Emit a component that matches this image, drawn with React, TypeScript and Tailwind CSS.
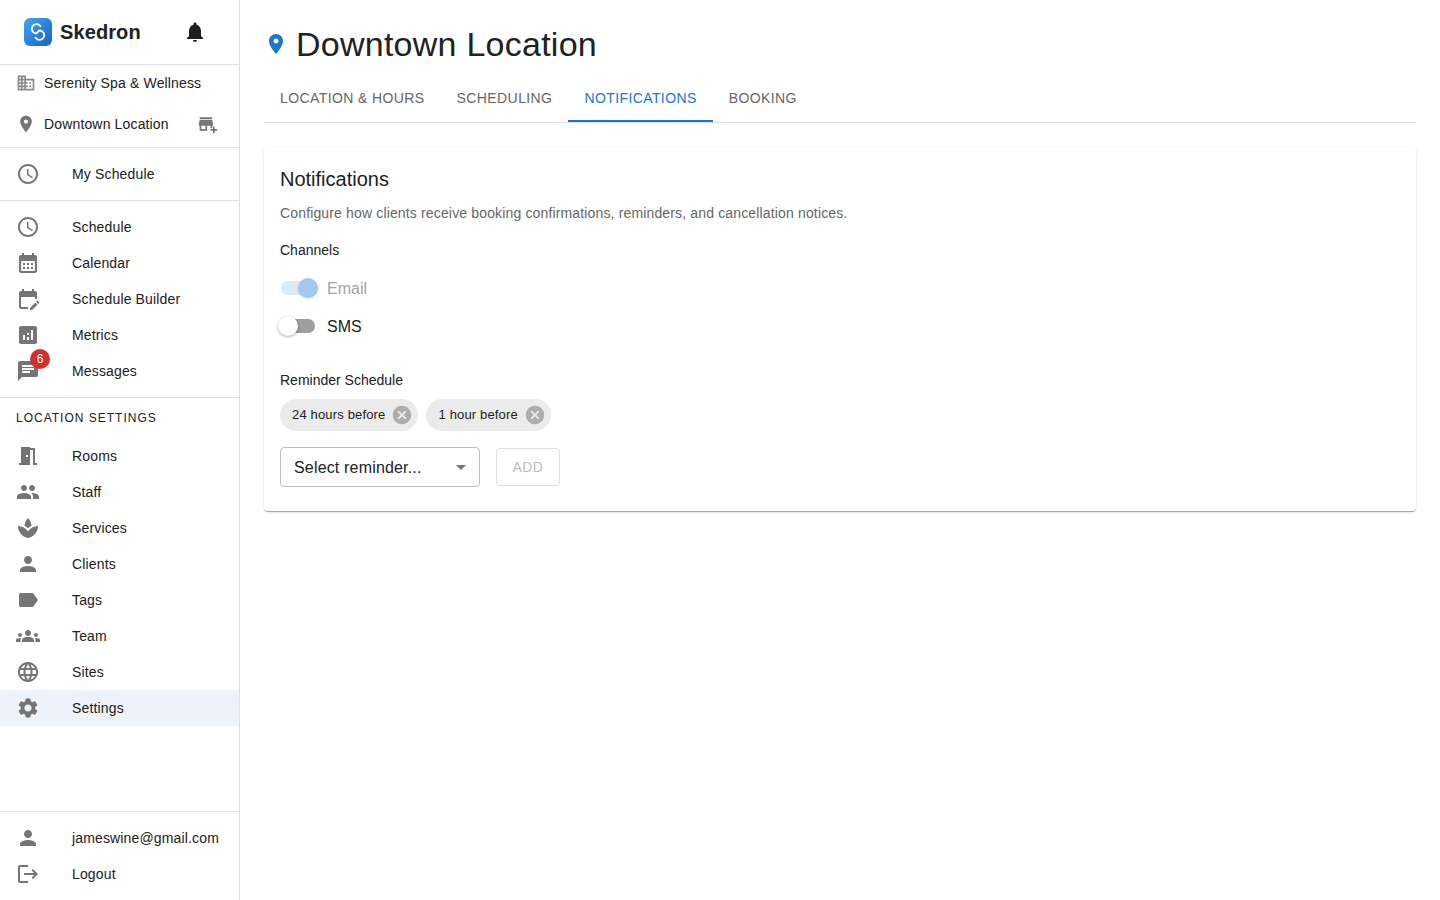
import React from 'react';

const ICONS: Record<string, string> = {
  bell: 'M12 22c1.1 0 2-.9 2-2h-4c0 1.1.89 2 2 2zm6-6v-5c0-3.07-1.64-5.64-4.5-6.32V4c0-.83-.67-1.5-1.5-1.5s-1.5.67-1.5 1.5v.68C7.63 5.36 6 7.92 6 11v5l-2 2v1h16v-1l-2-2z',
  business: 'M12 7V3H2v18h20V7H12zM6 19H4v-2h2v2zm0-4H4v-2h2v2zm0-4H4V9h2v2zm0-4H4V5h2v2zm4 12H8v-2h2v2zm0-4H8v-2h2v2zm0-4H8V9h2v2zm0-4H8V5h2v2zm10 12h-8v-2h2v-2h-2v-2h2v-2h-2V9h8v10zm-2-8h-2v2h2v-2zm0 4h-2v2h2v-2z',
  pin: 'M12 2C8.13 2 5 5.13 5 9c0 5.25 7 13 7 13s7-7.75 7-13c0-3.87-3.13-7-7-7zm0 9.5c-1.38 0-2.5-1.12-2.5-2.5s1.12-2.5 2.5-2.5 2.5 1.12 2.5 2.5-1.12 2.5-2.5 2.5z',
  addBusiness: 'M15 17h2v-3h1v-2l-1-5H2l-1 5v2h1v6h9v-6h4v3zm-6 1H4v-4h5v4zM2 4h15v2H2zM20 18v-3h-2v3h-3v2h3v3h2v-3h3v-2z',
  clock: 'M11.99 2C6.47 2 2 6.48 2 12s4.47 10 9.99 10C17.52 22 22 17.52 22 12S17.52 2 11.99 2zM12 20c-4.42 0-8-3.58-8-8s3.58-8 8-8 8 3.58 8 8-3.58 8-8 8zM12.5 7H11v6l5.25 3.15.75-1.23-4.5-2.67z',
  calendar: 'M19 4h-1V2h-2v2H8V2H6v2H5c-1.11 0-1.99.9-1.99 2L3 20c0 1.1.89 2 2 2h14c1.1 0 2-.9 2-2V6c0-1.1-.9-2-2-2zm0 16H5V10h14v10zM9 14H7v-2h2v2zm4 0h-2v-2h2v2zm4 0h-2v-2h2v2zm-8 4H7v-2h2v2zm4 0h-2v-2h2v2zm4 0h-2v-2h2v2z',
  editCalendar: 'M5 10h14v2h2V6c0-1.1-.9-2-2-2h-1V2h-2v2H8V2H6v2H5c-1.11 0-1.99.9-1.99 2L3 20c0 1.1.89 2 2 2h7v-2H5V10zm17.84 6.28-.71.71-2.12-2.12.71-.71c.39-.39 1.02-.39 1.41 0l.71.71c.39.39.39 1.02 0 1.41zm-3.54-.7 2.12 2.12-5.3 5.3H14v-2.12l5.3-5.3z',
  analytics: 'M19 3H5c-1.1 0-2 .9-2 2v14c0 1.1.9 2 2 2h14c1.1 0 2-.9 2-2V5c0-1.1-.9-2-2-2zM9 17H7v-5h2v5zm4 0h-2v-3h2v3zm0-5h-2v-2h2v2zm4 5h-2V7h2v10z',
  chat: 'M20 2H4c-1.1 0-1.99.9-1.99 2L2 22l4-4h14c1.1 0 2-.9 2-2V4c0-1.1-.9-2-2-2zM6 9h12v2H6V9zm8 5H6v-2h8v2zm4-6H6V6h12v2z',
  room: 'M14 6v15H3v-2h2V3h9v1h5v15h2v2h-4V6h-3zm-4 5v2h2v-2h-2z',
  people: 'M16 11c1.66 0 2.99-1.34 2.99-3S17.66 5 16 5c-1.66 0-3 1.34-3 3s1.34 3 3 3zm-8 0c1.66 0 2.99-1.34 2.99-3S9.66 5 8 5C6.34 5 5 6.34 5 8s1.34 3 3 3zm0 2c-2.33 0-7 1.17-7 3.5V19h14v-2.5c0-2.33-4.67-3.5-7-3.5zm8 0c-.29 0-.62.02-.97.05 1.16.84 1.97 1.97 1.97 3.45V19h6v-2.5c0-2.33-4.67-3.5-7-3.5z',
  spa: 'M15.49 9.63c-.18-2.79-1.31-5.51-3.43-7.63-2.14 2.14-3.32 4.86-3.55 7.63 1.28.68 2.46 1.56 3.49 2.63 1.03-1.06 2.21-1.94 3.49-2.63zM12 15.45C9.85 12.17 6.18 10 2 10c0 5.32 3.36 9.82 8.03 11.49.63.23 1.29.4 1.97.51.68-.12 1.33-.29 1.97-.51C18.64 19.82 22 15.32 22 10c-4.18 0-7.85 2.17-10 5.45z',
  person: 'M12 12c2.21 0 4-1.79 4-4s-1.79-4-4-4-4 1.79-4 4 1.79 4 4 4zm0 2c-2.67 0-8 1.34-8 4v2h16v-2c0-2.66-5.33-4-8-4z',
  label: 'M17.63 5.84C17.27 5.33 16.67 5 16 5L5 5.01C3.9 5.01 3 5.9 3 7v10c0 1.1.9 1.99 2 1.99L16 19c.67 0 1.27-.33 1.63-.84L22 12l-4.37-6.16z',
  groups: 'M12 12.75c1.63 0 3.07.39 4.24.9 1.08.48 1.76 1.56 1.76 2.73V18H6v-1.61c0-1.18.68-2.26 1.76-2.73 1.17-.52 2.61-.91 4.24-.91zM4 13c1.1 0 2-.9 2-2s-.9-2-2-2-2 .9-2 2 .9 2 2 2zm1.13 1.1c-.37-.06-.74-.1-1.13-.1-.99 0-1.93.21-2.78.58C.48 14.9 0 15.62 0 16.43V18h4.5v-1.61c0-.83.23-1.61.63-2.29zM20 13c1.1 0 2-.9 2-2s-.9-2-2-2-2 .9-2 2 .9 2 2 2zm4 3.43c0-.81-.48-1.53-1.22-1.85-.85-.37-1.79-.58-2.78-.58-.39 0-.76.04-1.13.1.4.68.63 1.46.63 2.29V18H24v-1.57zM12 6c1.66 0 3 1.34 3 3s-1.34 3-3 3-3-1.34-3-3 1.34-3 3-3z',
  globe: 'M11.99 2C6.47 2 2 6.48 2 12s4.47 10 9.99 10C17.52 22 22 17.52 22 12S17.52 2 11.99 2zm6.93 6h-2.95c-.32-1.25-.78-2.45-1.38-3.56 1.84.63 3.37 1.91 4.33 3.56zM12 4.04c.83 1.2 1.48 2.53 1.91 3.96h-3.82c.43-1.43 1.08-2.76 1.91-3.96zM4.26 14C4.1 13.36 4 12.69 4 12s.1-1.36.26-2h3.38c-.08.66-.14 1.32-.14 2 0 .68.06 1.34.14 2H4.26zm.82 2h2.95c.32 1.25.78 2.45 1.38 3.56-1.84-.63-3.37-1.9-4.33-3.56zm2.95-8H5.08c.96-1.66 2.49-2.93 4.33-3.56C8.81 5.55 8.35 6.75 8.03 8zM12 19.96c-.83-1.2-1.48-2.53-1.91-3.96h3.82c-.43 1.43-1.08 2.76-1.91 3.96zM14.34 14H9.66c-.09-.66-.16-1.32-.16-2 0-.68.07-1.35.16-2h4.68c.09.65.16 1.32.16 2 0 .68-.07 1.34-.16 2zm.25 5.56c.6-1.11 1.06-2.31 1.38-3.56h2.95c-.96 1.65-2.49 2.93-4.33 3.56zM16.36 14c.08-.66.14-1.32.14-2 0-.68-.06-1.34-.14-2h3.38c.16.64.26 1.31.26 2s-.1 1.36-.26 2h-3.38z',
  settings: 'M19.14 12.94c.04-.3.06-.61.06-.94 0-.32-.02-.64-.07-.94l2.03-1.58c.18-.14.23-.41.12-.61l-1.92-3.32c-.12-.22-.37-.29-.59-.22l-2.39.96c-.5-.38-1.03-.7-1.62-.94l-.36-2.54c-.04-.24-.24-.41-.48-.41h-3.84c-.24 0-.43.17-.47.41l-.36 2.54c-.59.24-1.13.57-1.62.94l-2.39-.96c-.22-.08-.47 0-.59.22L2.74 8.87c-.12.21-.08.47.12.61l2.03 1.58c-.05.3-.09.63-.09.94s.02.64.07.94l-2.03 1.58c-.18.14-.23.41-.12.61l1.92 3.32c.12.22.37.29.59.22l2.39-.96c.5.38 1.03.7 1.62.94l.36 2.54c.05.24.24.41.48.41h3.84c.24 0 .44-.17.47-.41l.36-2.54c.59-.24 1.13-.56 1.62-.94l2.39.96c.22.08.47 0 .59-.22l1.92-3.32c.12-.22.07-.47-.12-.61l-2.01-1.58zM12 15.6c-1.98 0-3.6-1.62-3.6-3.6s1.62-3.6 3.6-3.6 3.6 1.62 3.6 3.6-1.62 3.6-3.6 3.6z',
  logout: 'm17 7-1.41 1.41L18.17 11H8v2h10.17l-2.58 2.58L17 17l5-5zM4 5h8V3H4c-1.1 0-2 .9-2 2v14c0 1.1.9 2 2 2h8v-2H4V5z',
  cancel: 'M12 2C6.47 2 2 6.47 2 12s4.47 10 10 10 10-4.47 10-10S17.53 2 12 2zm5 13.59L15.59 17 12 13.41 8.41 17 7 15.59 10.59 12 7 8.41 8.41 7 12 10.59 15.59 7 17 8.41 13.41 12 17 15.59z',
  arrowDown: 'M7 10l5 5 5-5z',
};

const Icon: React.FC<{ name: string; className: string }> = ({ name, className }) => (
  <svg viewBox="0 0 24 24" fill="currentColor" className={className}>
    <path d={ICONS[name]} />
  </svg>
);

const NavItem: React.FC<{ icon: string; label: string; active?: boolean; badge?: string }> = ({ icon, label, active, badge }) => (
  <div className={`flex items-center h-9 pl-4 ${active ? 'bg-[#edf3fb]' : ''}`}>
    <div className="relative w-14 shrink-0">
      <Icon name={icon} className="w-6 h-6 text-[#757575]" />
      {badge && (
        <span className="absolute -top-[10px] left-[14px] w-5 h-5 rounded-full bg-[#d32f2f] text-white text-[12px] flex items-center justify-center">
          {badge}
        </span>
      )}
    </div>
    <span className="text-[14px] tracking-[0.15px] text-[#212121]">{label}</span>
  </div>
);

const Divider = () => <div className="h-px bg-[#e0e0e0]" />;

const tabs = ['LOCATION & HOURS', 'SCHEDULING', 'NOTIFICATIONS', 'BOOKING'];
const mainNav = [
  { icon: 'clock', label: 'Schedule' },
  { icon: 'calendar', label: 'Calendar' },
  { icon: 'editCalendar', label: 'Schedule Builder' },
  { icon: 'analytics', label: 'Metrics' },
  { icon: 'chat', label: 'Messages', badge: '6' },
];
const settingsNav = [
  { icon: 'room', label: 'Rooms' },
  { icon: 'people', label: 'Staff' },
  { icon: 'spa', label: 'Services' },
  { icon: 'person', label: 'Clients' },
  { icon: 'label', label: 'Tags' },
  { icon: 'groups', label: 'Team' },
  { icon: 'globe', label: 'Sites' },
  { icon: 'settings', label: 'Settings', active: true },
];

const Chip: React.FC<{ label: string }> = ({ label }) => (
  <div className="h-8 rounded-full bg-[#ebebeb] flex items-center pl-3 pr-[5px] gap-[6px]">
    <span className="text-[13px] text-[#212121] tracking-[0.16px]">{label}</span>
    <Icon name="cancel" className="w-[22px] h-[22px] text-[#adadad]" />
  </div>
);

export default function App() {
  return (
    <div className="flex h-screen bg-white font-['Liberation_Sans',Arial,sans-serif] text-[#212121] overflow-hidden">
      <aside className="w-[240px] shrink-0 border-r border-[#e0e0e0] flex flex-col">
        <div className="h-16 flex items-center pl-6 pr-8">
          <svg viewBox="0 0 28 28" className="w-7 h-7 shrink-0">
            <defs>
              <linearGradient id="logo" x1="0" y1="0" x2="1" y2="1">
                <stop offset="0" stopColor="#42a5f5" />
                <stop offset="1" stopColor="#1565c0" />
              </linearGradient>
            </defs>
            <rect width="28" height="28" rx="6" fill="url(#logo)" />
            <path d="M16.4 8.2A4.7 4.7 0 1 0 12 15.5C13.6 15.4 14 12.6 15.5 12.5A4.7 4.7 0 1 1 11.6 19.8" fill="none" stroke="#ffffff" strokeWidth="1.9" strokeLinecap="round" />
          </svg>
          <span className="ml-2 text-[20px] font-bold tracking-[0.1px] text-[#212121]">Skedron</span>
          <Icon name="bell" className="w-6 h-6 ml-auto text-[#1f1f1f]" />
        </div>
        <Divider />
        <div className="h-[82px] flex flex-col">
          <div className="flex items-center h-[36px] pl-4">
            <Icon name="business" className="w-5 h-5 text-[#8a8a8a] mr-2" />
            <span className="text-[14px] tracking-[0.15px]">Serenity Spa &amp; Wellness</span>
          </div>
          <div className="flex items-center h-[36px] mt-[5px] pl-4 pr-[21px]">
            <Icon name="pin" className="w-5 h-5 text-[#757575] mr-2" />
            <span className="text-[14px] tracking-[0.15px]">Downtown Location</span>
            <Icon name="addBusiness" className="w-5 h-5 ml-auto text-[#757575]" />
          </div>
        </div>
        <Divider />
        <div className="py-2">
          <NavItem icon="clock" label="My Schedule" />
        </div>
        <Divider />
        <div className="pt-2 pb-2">
          {mainNav.map((item) => (
            <NavItem key={item.label} {...item} />
          ))}
        </div>
        <Divider />
        <div className="h-[40px] flex items-center pl-4 text-[12px] tracking-[1px] text-[#212121]">LOCATION SETTINGS</div>
        {settingsNav.map((item) => (
          <NavItem key={item.label} {...item} />
        ))}
        <div className="flex-1" />
        <Divider />
        <div className="pt-2 pb-2">
          <NavItem icon="person" label="jameswine@gmail.com" />
          <NavItem icon="logout" label="Logout" />
        </div>
      </aside>

      <main className="flex-1 min-w-0 p-6">
        <div className="flex items-center h-10 gap-2">
          <Icon name="pin" className="w-6 h-6 text-[#1976d2]" />
          <h1 className="text-[34px] leading-10 font-normal tracking-[0.25px] text-[#212121]">Downtown Location</h1>
        </div>
        <div className="mt-[10px] h-[49px] border-b border-[#e0e0e0] flex">
          {tabs.map((tab) => (
            <div
              key={tab}
              className={`relative h-12 px-4 flex items-center text-[14px] tracking-[0.4px] ${
                tab === 'NOTIFICATIONS' ? 'text-[#1976d2]' : 'text-[#666666]'
              }`}
            >
              {tab}
              {tab === 'NOTIFICATIONS' && <span className="absolute left-0 right-0 bottom-0 h-[2px] bg-[#1976d2]" />}
            </div>
          ))}
        </div>

        <section className="mt-6 h-[364px] rounded bg-white p-4 shadow-[0_2px_1px_-1px_rgba(0,0,0,0.2),0_1px_1px_0_rgba(0,0,0,0.14),0_1px_3px_0_rgba(0,0,0,0.12)]">
          <h2 className="text-[20px] leading-8 font-normal">Notifications</h2>
          <p className="mt-2 text-[14px] leading-5 tracking-[0.15px] text-[#666666]">
            Configure how clients receive booking confirmations, reminders, and cancellation notices.
          </p>
          <p className="mt-[17px] text-[14px] leading-5">Channels</p>

          <div className="mt-[10px] flex items-center h-[38px]">
            <div className="relative w-[34px] h-[14px] ml-[1px] mb-[2px] rounded-full bg-[#dbe9f8]">
              <span className="absolute -top-[3px] left-[17px] w-5 h-5 rounded-full bg-[#a3c8ee] shadow-sm" />
            </div>
            <span className="ml-3 text-[16px] text-[#a3a3a3]">Email</span>
          </div>
          <div className="flex items-center h-[38px]">
            <div className="relative w-[34px] h-[14px] ml-[1px] mb-[2px] rounded-full bg-[#9e9e9e]">
              <span className="absolute -top-[3px] -left-[3px] w-5 h-5 rounded-full bg-white shadow-[0_1px_3px_rgba(0,0,0,0.35)]" />
            </div>
            <span className="ml-3 text-[16px]">SMS</span>
          </div>

          <p className="mt-[24px] text-[14px] leading-5">Reminder Schedule</p>
          <div className="mt-[9px] flex gap-2">
            <Chip label="24 hours before" />
            <Chip label="1 hour before" />
          </div>
          <div className="mt-4 flex items-center gap-4">
            <div className="w-[200px] h-10 rounded border border-[#bdbdbd] flex items-center pl-[13px] pr-[6px] text-[16px] tracking-[0.17px]">
              <span className="pt-[2px]">Select reminder...</span>
              <Icon name="arrowDown" className="w-6 h-6 ml-auto text-[#757575]" />
            </div>
            <div className="w-16 h-[38px] rounded border border-[#e0e0e0] flex items-center justify-center text-[14px] tracking-[0.4px] text-[#bdbdbd]">
              ADD
            </div>
          </div>
        </section>
      </main>
    </div>
  );
}
